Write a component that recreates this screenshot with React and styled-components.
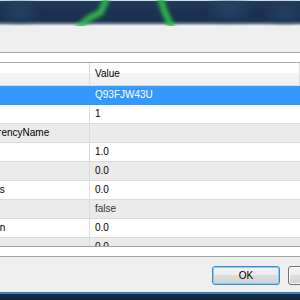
import React from "react";
import styled, { createGlobalStyle } from "styled-components";

const Global = createGlobalStyle`
  html, body { margin: 0; padding: 0; overflow: hidden; background: #efefef; }
  #root { width: 300px; height: 300px; overflow: hidden; }
  * { box-sizing: border-box; }
`;

const Screen = styled.div`
  width: 300px;
  height: 300px;
  overflow: hidden;
  display: flex;
  flex-direction: column;
  font-family: "Liberation Sans", Arial, sans-serif;
  font-size: 10px;
  color: #000;
`;

const Backdrop = styled.div`
  height: 26px;
  flex: none;
  background: linear-gradient(
    to bottom,
    #d3dbe2 0px,
    #d3dbe2 1px,
    #223a58 1px,
    #1b3150 12px,
    #1c3350 21px,
    #6c7d8e 23.5px,
    #c9ced3 25px,
    #efefef 26px
  );
`;

const ChartSvg = styled.svg`
  display: block;
`;

const Dialog = styled.div`
  flex: 1;
  display: flex;
  flex-direction: column;
  background: #efefef;
  padding-top: 26px;
`;

const Frame = styled.div`
  margin-left: -24px;
  border-top: 1px solid #a2a4a8;
  border-bottom: 1px solid #a2a4a8;
  background: #fff;
  padding: 9px 0;
`;

const Grid = styled.div`
  border-top: 1px solid #a6a8ac;
  border-bottom: 1px solid #a0a0a0;
  height: 185px;
  display: flex;
  flex-direction: column;
`;

const Header = styled.div`
  height: 23px;
  flex: none;
  display: grid;
  grid-template-columns: 114px 210px 1fr;
  border-bottom: 1px solid #d8dadd;
  background: linear-gradient(to bottom, #ffffff 0, #ffffff 45%, #f3f4f6 45%, #eef0f2 100%);
`;

const HeaderCell = styled.div`
  border-right: ${(p) => (p.$last ? "none" : "1px solid #dcdde0")};
  padding-left: 5px;
  line-height: 22px;
  color: #000;
`;

const Rows = styled.div`
  flex: 1;
  overflow: hidden;
`;

const Row = styled.div`
  display: grid;
  grid-template-columns: 114px 1fr;
  height: 19px;
  border-bottom: 1px solid ${(p) => (p.$selected ? "#3399ff" : "#dadada")};
  background: ${(p) => (p.$selected ? "#3399ff" : p.$shade ? "#ebebeb" : "#ffffff")};
  color: ${(p) => (p.$selected ? "#ffffff" : "#000000")};
`;

const NameCell = styled.div`
  padding-left: 6px;
  line-height: 18px;
  white-space: nowrap;
  overflow: hidden;
  border-right: 1px solid ${(p) => (p.$selected ? "#3399ff" : "#dcdcdc")};
`;

const ValueCell = styled.div`
  padding-left: 5px;
  line-height: 18px;
  white-space: nowrap;
  color: ${(p) => (p.$muted ? "#333" : "inherit")};
`;

const ButtonRow = styled.div`
  display: flex;
  justify-content: flex-end;
  gap: 8px;
  margin-top: 9px;
  margin-right: -56px;
`;

const Button = styled.button`
  width: 68px;
  height: 19px;
  padding: 0;
  border-radius: 3px;
  font-family: "Liberation Sans", Arial, sans-serif;
  font-size: 10px;
  color: #000;
  border: 1px solid ${(p) => (p.$default ? "#3c8cc4" : "#707070")};
  box-shadow: ${(p) => (p.$default ? "inset 0 0 0 1px #7fd2f5" : "inset 0 0 0 1px #fbfbfb")};
  background: linear-gradient(to bottom, #f3f3f3 0, #ececec 50%, #dddddd 50%, #d2d2d2 100%);
`;

const Taskbar = styled.div`
  height: 8px;
  flex: none;
  background: linear-gradient(
    to bottom,
    #5c7088 0px,
    #5c7088 1px,
    #2a90d4 1px,
    #2a90d4 2px,
    #14304f 2px,
    #10253f 8px
  );
`;

const rows = [
  { name: "ID", value: "Q93FJW43U" },
  { name: "Lot", value: "1" },
  { name: "CurrencyName", value: "" },
  { name: "Bid", value: "1.0" },
  { name: "Pt", value: "0.0" },
  { name: "Pairs", value: "0.0" },
  { name: "Hid", value: "false", muted: true },
  { name: "Span", value: "0.0" },
  { name: "Vol", value: "0.0" },
];

export default function App() {
  return (
    <>
      <Global />
      <Screen>
        <Backdrop>
          <ChartSvg width="300" height="26" viewBox="0 0 300 26">
            <defs>
              <filter id="blur" x="-50%" y="-50%" width="200%" height="200%">
                <feGaussianBlur stdDeviation="2.2" />
              </filter>
              <filter id="haze" x="-50%" y="-50%" width="200%" height="200%">
                <feGaussianBlur stdDeviation="6" />
              </filter>
            </defs>
            <g filter="url(#haze)" fill="#2c4a6c" opacity="0.7">
              <ellipse cx="20" cy="12" rx="14" ry="8" />
              <ellipse cx="230" cy="10" rx="18" ry="8" />
              <ellipse cx="285" cy="14" rx="14" ry="7" />
            </g>
            <g filter="url(#blur)" stroke="#2dbd4c" strokeWidth="6" fill="none" strokeLinecap="round">
              <path d="M107 -3 L101 12 L88 19 L78 28" />
              <path d="M160 -3 L164 10 L172 28" />
            </g>
          </ChartSvg>
        </Backdrop>
        <Dialog>
          <Frame>
            <Grid>
              <Header>
                <HeaderCell />
                <HeaderCell>Value</HeaderCell>
                <HeaderCell $last />
              </Header>
              <Rows>
                {rows.map((r, i) => (
                  <Row key={i} $selected={i === 0} $shade={i % 2 === 0}>
                    <NameCell $selected={i === 0}>{r.name}</NameCell>
                    <ValueCell $muted={r.muted}>{r.value}</ValueCell>
                  </Row>
                ))}
              </Rows>
            </Grid>
          </Frame>
          <ButtonRow>
            <Button $default>OK</Button>
            <Button>Cancel</Button>
          </ButtonRow>
        </Dialog>
        <Taskbar />
      </Screen>
    </>
  );
}
